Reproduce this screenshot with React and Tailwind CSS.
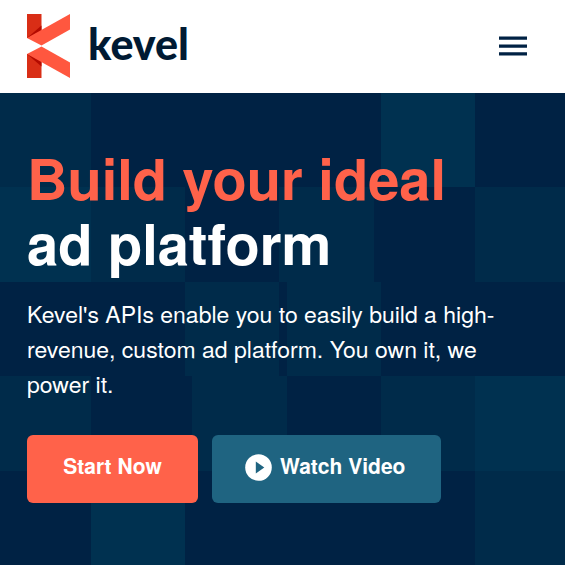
const tiles = [
  [0, 0, 91, 94, '#002b4a'],
  [381, 0, 94, 94, '#003150'],
  [0, 94, 91, 95, '#003150'],
  [91, 94, 94, 95, '#002b4a'],
  [279, 94, 95, 95, '#002b4a'],
  [475, 94, 95, 95, '#002b4a'],
  [185, 189, 94, 94, '#002b4a'],
  [287, 189, 94, 94, '#002b4a'],
  [0, 283, 91, 95, '#002b4a'],
  [192, 283, 95, 95, '#002b4a'],
  [381, 283, 94, 95, '#002b4a'],
  [475, 283, 95, 95, '#003150'],
  [91, 378, 94, 94, '#003150'],
  [475, 378, 95, 94, '#002b4a'],
];

function Backdrop() {
  return (
    <svg
      className="absolute inset-0 -z-10 h-full w-full"
      viewBox="0 0 565 472"
      preserveAspectRatio="xMinYMin slice"
      aria-hidden="true"
      shapeRendering="crispEdges"
    >
      {tiles.map(([x, y, w, h, fill]) => (
        <rect key={x + '-' + y} x={x} y={y} width={w} height={h} fill={fill} />
      ))}
    </svg>
  );
}

function Logo() {
  return (
    <a href="#" className="flex items-center" aria-label="kevel">
      <svg width="166" height="64" viewBox="0 0 166 64" aria-hidden="true">
        <path d="M0 0h14.500v24H0z" fill="#d92e16" />
        <path d="M0 64h14.500V40H0z" fill="#d92e16" />
        <path d="M0 24L14.500 11.500V24z" fill="#b30a00" />
        <path d="M0 40L14.500 52.500V40z" fill="#b30a00" />
        <path d="M0 24L43 0v15.500L14.500 31.500z" fill="#ff573f" />
        <path d="M0 40L14.500 32.500L43 48.500v15.500z" fill="#ff573f" />
        <text x="61" y="46" fontSize="43" fontWeight="900" fill="#001a33" className="font-['Lato',sans-serif]">
          kevel
        </text>
      </svg>
    </a>
  );
}

export default function App() {
  return (
    <div className="flex min-h-screen flex-col bg-[#002244] font-['Nimbus_Sans','TeX_Gyre_Heros','Liberation_Sans',sans-serif] text-white">
      <header className="flex items-center justify-between bg-white px-[27px] pt-[14px] pb-[15px]">
        <Logo />
        <button type="button" aria-label="Open menu" className="mr-[11px] flex h-10 w-7 items-center justify-center">
          <svg width="28" height="20" viewBox="0 0 28 20" fill="#002244" aria-hidden="true">
            <path d="M0 .5h28v3.300H0zM0 8.400h28v3.300H0zM0 16.200h28v3.300H0z" />
          </svg>
        </button>
      </header>
      <main className="relative isolate flex-1 overflow-hidden px-[27px] pt-[52px] pb-[62px]">
        <Backdrop />
        <h1 className="text-[56px] leading-[65px] font-bold">
          <span className="block text-[#ff624a]">Build your ideal</span>
          <span className="block">ad platform</span>
        </h1>
        <p className="mt-[21px] text-[23px] leading-[35px]">
          Kevel's APIs enable you to easily build a high-revenue, custom ad platform. You own it, we power it.
        </p>
        <div className="mt-[34px] flex flex-wrap gap-[14px] text-[21px] leading-[28px] font-bold">
          <button type="button" className="h-[68px] min-w-[171px] rounded-md bg-[#ff624a] px-9 pb-2">
            Start Now
          </button>
          <button type="button" className="flex h-[68px] items-center gap-2 rounded-md bg-[#1f6481] pr-9 pb-1 pl-[33px]">
            <svg width="27" height="27" viewBox="0 0 27 27" aria-hidden="true">
              <circle cx="13.500" cy="13.500" r="13.300" fill="#fff" />
              <path d="M10.800 7.500v12l8.500-6z" fill="#1f6481" />
            </svg>
            <span className="pb-1">Watch Video</span>
          </button>
        </div>
      </main>
    </div>
  );
}
